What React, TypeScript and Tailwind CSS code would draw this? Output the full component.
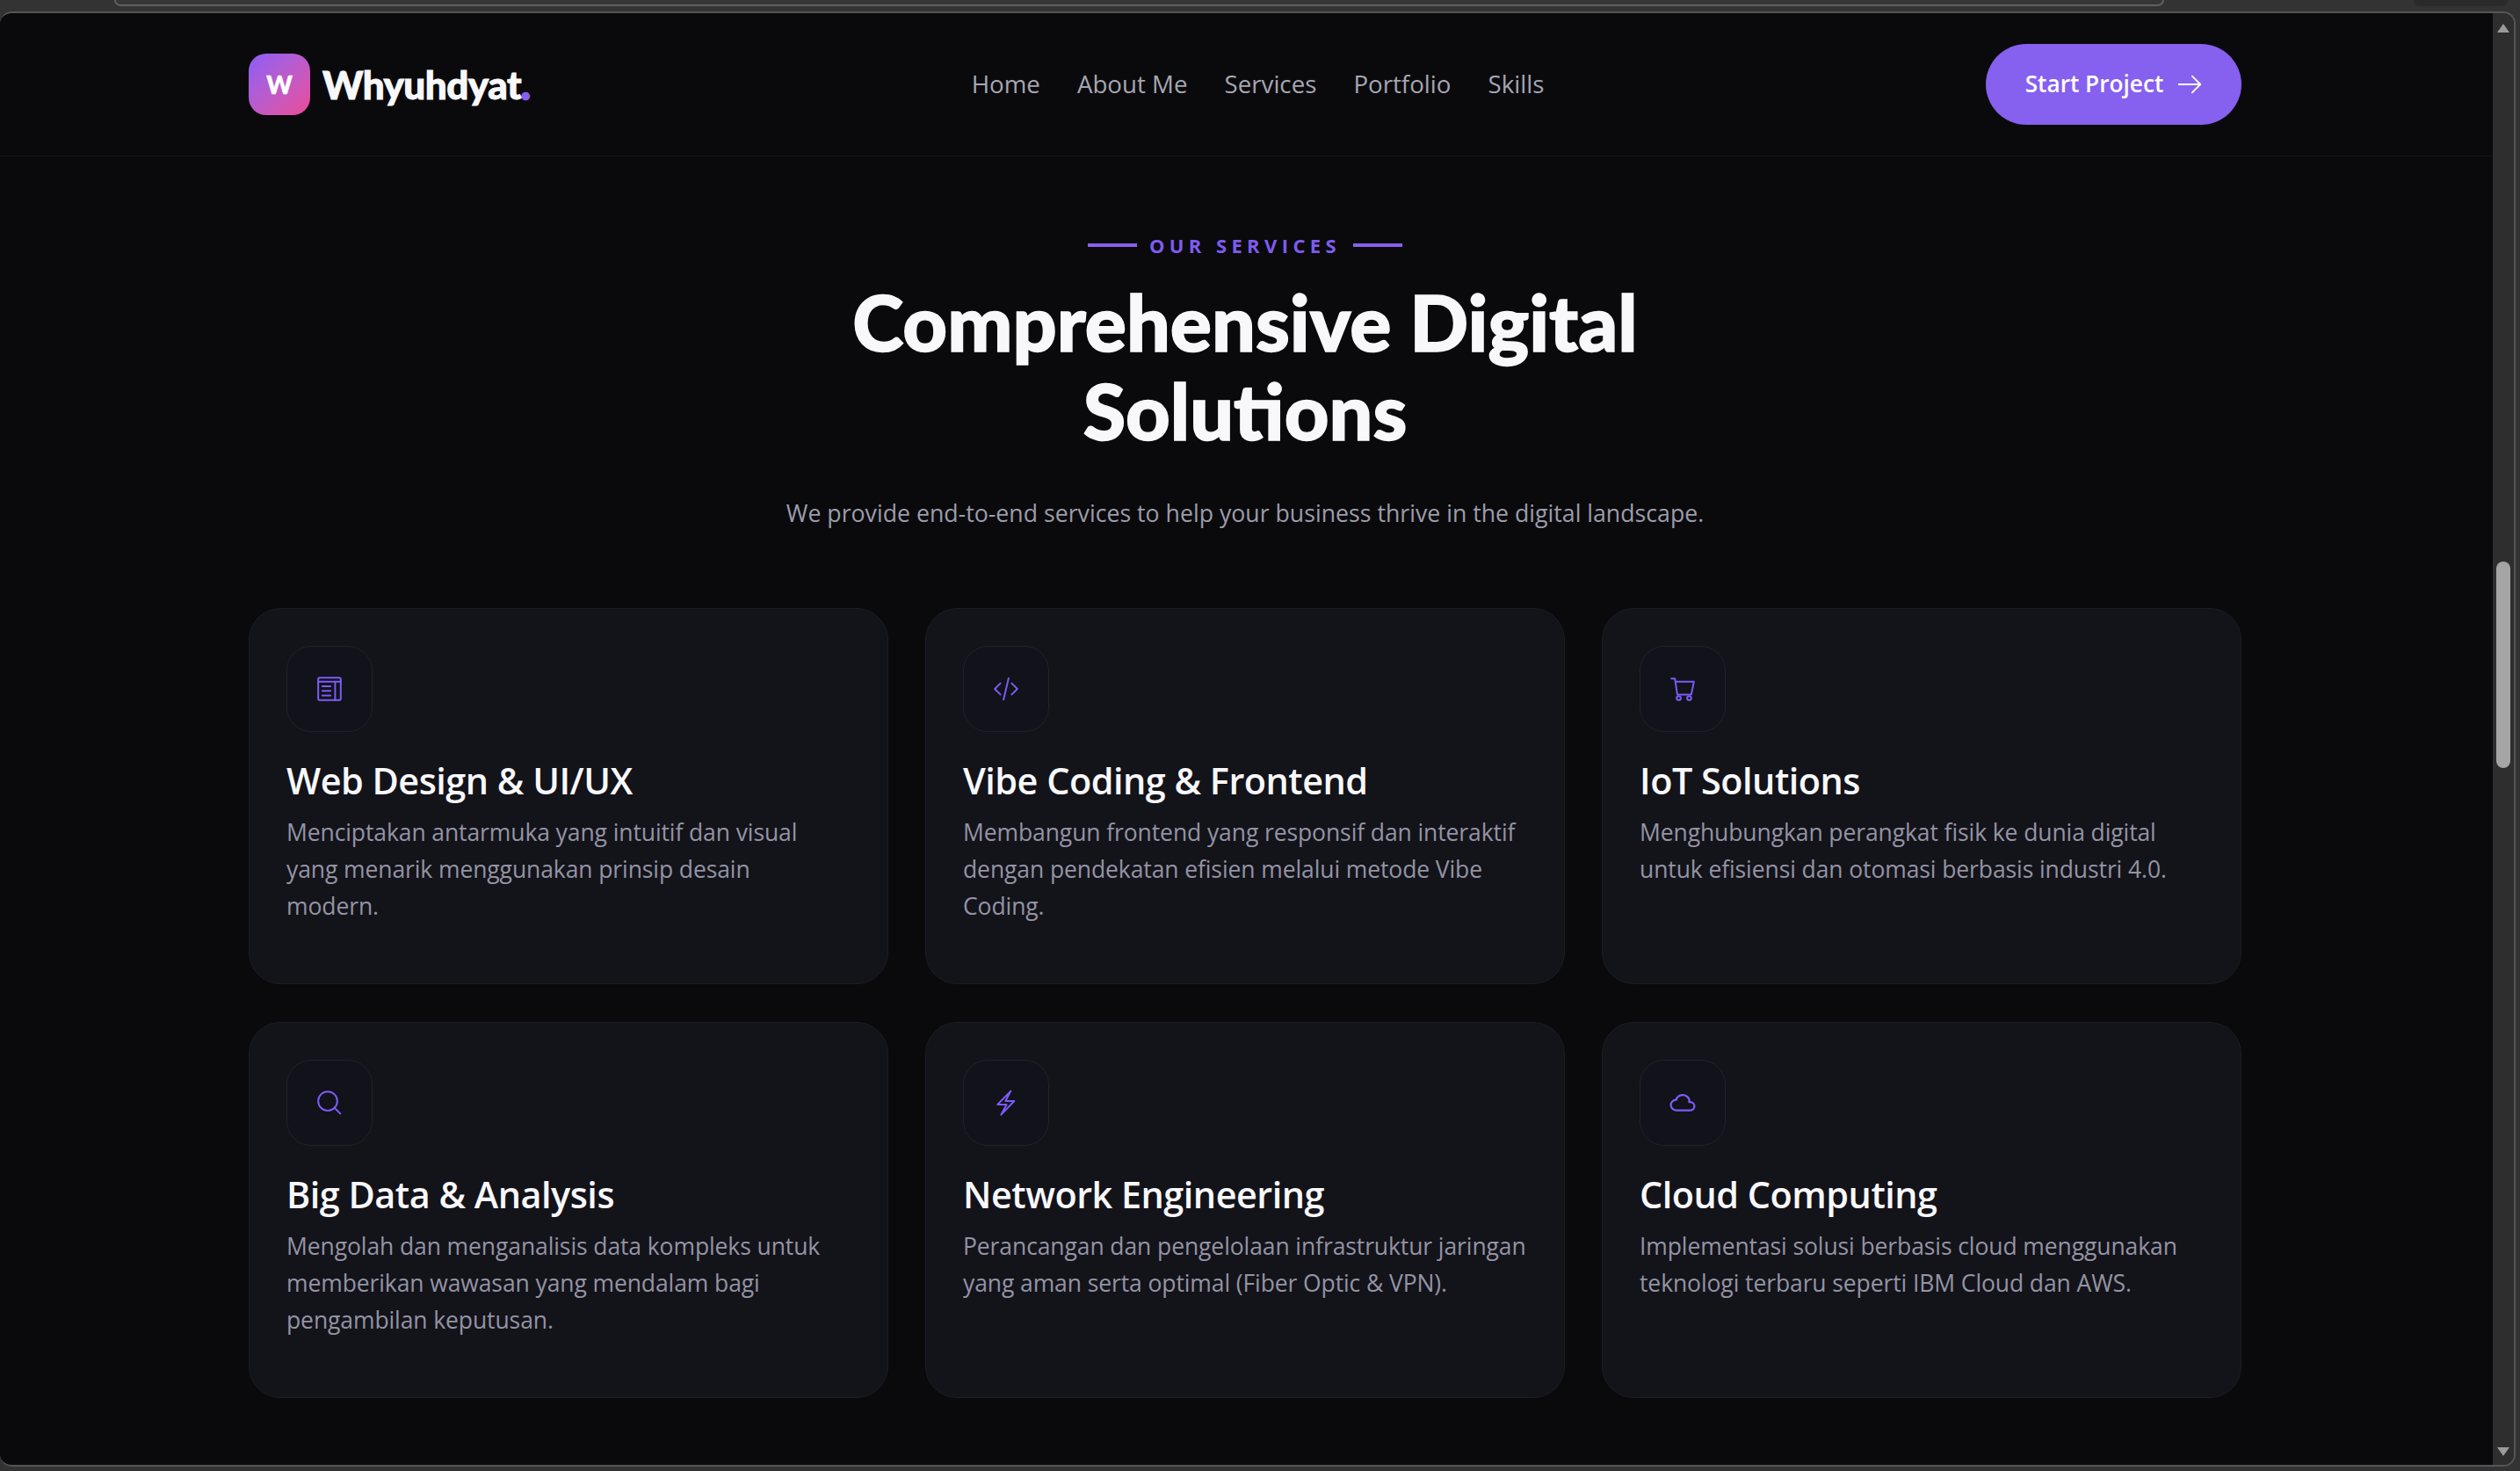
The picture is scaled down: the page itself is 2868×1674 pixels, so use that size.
import React from "react";

const icons: Record<string, React.ReactNode> = {
  layout: (
    <>
      <rect x="1" y="1" width="22" height="22" rx="1.5" />
      <path d="M1 5h22M17.5 5v18M5 9.5h8M5 14h8M5 18.5h8" />
    </>
  ),
  code: <path d="M6.5 6.5 1 12l5.5 5.5M17.5 6.5 23 12l-5.5 5.5M14.5 1.5l-5 21" />,
  cart: (
    <>
      <path d="M1 2h3.5l2.3 15.5h13.6L23 5H4.9" />
      <circle cx="8.2" cy="21" r="2" />
      <circle cx="18.4" cy="21" r="2" />
    </>
  ),
  search: (
    <>
      <circle cx="10.3" cy="10.3" r="9.3" />
      <path d="M17 17l5.5 5.5" />
    </>
  ),
  zap: <path d="M16.6.5 3.7 13.7h8.8L7.1 23.7 20 10.3h-8.6L16.6.5Z" />,
  cloud: (
    <path
      transform="translate(12 11.6) scale(1.15) translate(-12 -12.3)"
      d="M6.657 19c-2.572 0-4.657-2.007-4.657-4.483 0-2.475 2.085-4.482 4.657-4.482.393-1.762 1.794-3.2 3.675-3.773 1.88-.572 3.956-.193 5.444 1 1.488 1.19 2.162 3.007 1.77 4.769h.99c1.913 0 3.464 1.56 3.464 3.486 0 1.927-1.551 3.487-3.465 3.487H6.657Z"
    />
  ),
};

const services = [
  { icon: "layout", title: "Web Design & UI/UX", text: "Menciptakan antarmuka yang intuitif dan visual yang menarik menggunakan prinsip desain\nmodern." },
  { icon: "code", title: "Vibe Coding & Frontend", text: "Membangun frontend yang responsif dan interaktif dengan pendekatan efisien melalui metode Vibe Coding." },
  { icon: "cart", title: "IoT Solutions", text: "Menghubungkan perangkat fisik ke dunia digital untuk efisiensi dan otomasi berbasis industri 4.0." },
  { icon: "search", title: "Big Data & Analysis", text: "Mengolah dan menganalisis data kompleks untuk memberikan wawasan yang mendalam bagi pengambilan keputusan." },
  { icon: "zap", title: "Network Engineering", text: "Perancangan dan pengelolaan infrastruktur jaringan yang aman serta optimal (Fiber Optic & VPN)." },
  { icon: "cloud", title: "Cloud Computing", text: "Implementasi solusi berbasis cloud menggunakan teknologi terbaru seperti IBM Cloud dan AWS." },
];

function Card({ icon, title, text }: { icon: string; title: string; text: string }) {
  return (
    <div className="rounded-[36px] border border-[#1c1c24] bg-[#13131a] pl-[42px] pr-[42px] pt-[42px] pb-[67px]">
      <div className="flex h-[98px] w-[98px] items-center justify-center rounded-[28px] border border-[#22222a] bg-[#12121a]">
        <svg className="overflow-visible" width="28" height="28" viewBox="0 0 24 24" fill="none" stroke="#7c5cf5" strokeWidth="1.7" strokeLinecap="round" strokeLinejoin="round">
          {icons[icon]}
        </svg>
      </div>
      <h3 className="mt-[25px] text-[41.4px] leading-[60px] font-semibold tracking-[-0.5px] text-[#f8f8fa]">{title}</h3>
      <p className="mt-[8px] whitespace-pre-line text-[26.5px] leading-[42px] tracking-[-0.1px] text-[#9494a4]">{text}</p>
    </div>
  );
}

export default function App() {
  return (
    <div className="flex h-[1674px] w-[2868px] flex-col overflow-hidden bg-[#333333] font-['Open_Sans',sans-serif]">
      <div className="flex h-[13px] shrink-0 items-start justify-between pl-[130px] pr-[14px]">
        <div className="h-[7px] w-[2333px] rounded-b-[12px] border-x-2 border-b-2 border-[#5f5f5f] bg-[#363636]" />
        <div className="h-[7px] w-[107px] rounded-b-[12px] bg-[#2a2a2a]" />
      </div>
      <div className="mr-[5px] flex h-[1656px] shrink-0 overflow-hidden rounded-t-[14px] rounded-b-[14px] border-t-2 border-r-2 border-b-2 border-[#555555]">
        <div className="h-full w-[2837px] bg-[#0a0a0c]">
          <nav className="flex h-[163px] items-center justify-between border-b border-[#17171b] pl-[283px] pr-[286px]">
            <div className="flex items-center gap-[14px]">
              <div className="flex h-[70px] w-[70px] items-center justify-center rounded-[20px] bg-linear-to-br from-[#8b5cf6] to-[#ec4899] font-['Lato',sans-serif] text-[28px] font-black text-white [-webkit-text-stroke:0.6px_#ffffff]">
                W
              </div>
              <span className="font-['Lato',sans-serif] text-[44px] font-black tracking-[-0.5px] text-[#f8f8fa] [-webkit-text-stroke:1px_currentColor]">
                Whyuhdyat<span className="text-[#8660ee] [-webkit-text-stroke:2.5px_currentColor]">.</span>
              </span>
            </div>
            <div className="flex items-center gap-[42px] text-[27.7px] font-medium text-[#a6a6b2]">
              <span>Home</span>
              <span>About Me</span>
              <span>Services</span>
              <span>Portfolio</span>
              <span>Skills</span>
            </div>
            <button className="flex h-[92px] w-[291px] items-center justify-center gap-[16px] rounded-full bg-[#8660ee] text-[26.2px] font-semibold text-white">
              Start Project
              <svg width="28" height="28" viewBox="0 0 24 24" fill="none" stroke="white" strokeWidth="1.6" strokeLinecap="round" strokeLinejoin="round">
                <path d="M1.5 12h21M14.5 4l8 8-8 8" />
              </svg>
            </button>
          </nav>
          <main className="pl-[283px] pr-[286px] pt-[83px]">
            <div className="flex items-center justify-center gap-[14px]">
              <div className="h-[4px] w-[56px] bg-[#8660ee]" />
              <span className="text-[22px] leading-[36px] font-bold tracking-[5.4px] text-[#7f5bf0]">OUR SERVICES</span>
              <div className="h-[4px] w-[56px] bg-[#8660ee]" />
            </div>
            <h1 className="mx-auto mt-[19px] w-[1100px] text-center font-['Lato',sans-serif] text-[88px] leading-[101px] font-black text-[#f8f8fa] [-webkit-text-stroke:1.5px_#f8f8fa]">
              Comprehensive Digital Solutions
            </h1>
            <p className="mt-[44px] text-center text-[26.7px] leading-[44px] text-[#9c9cab]">
              We provide end-to-end services to help your business thrive in the digital landscape.
            </p>
            <div className="mt-[86px] grid grid-cols-3 gap-x-[42px] gap-y-[43px]">
              {services.map((s) => (
                <Card key={s.title} {...s} />
              ))}
            </div>
          </main>
        </div>
        <div className="flex flex-1 flex-col items-center bg-[#2e2e2e] pt-[12px]">
          <div className="h-0 w-0 border-x-[7px] border-b-[10px] border-x-transparent border-b-[#9a9a9a]" />
          <div className="mt-[602px] h-[235px] w-[16px] shrink-0 rounded-full bg-[#a5a5a5]" />
          <div className="mt-[773px] h-0 w-0 border-x-[7px] border-t-[10px] border-x-transparent border-t-[#9a9a9a]" />
        </div>
      </div>
    </div>
  );
}
